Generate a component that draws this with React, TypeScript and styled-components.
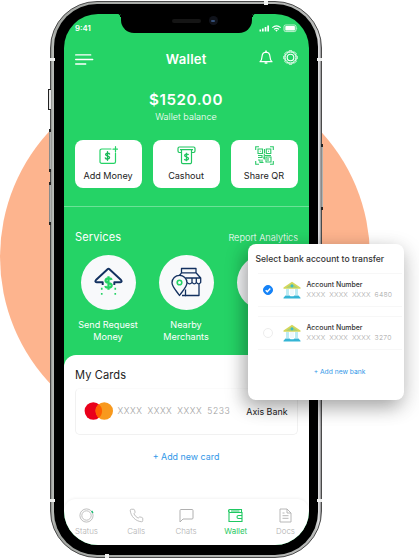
import React from 'react';
import styled, { createGlobalStyle, css } from 'styled-components';

const GREEN = '#25d366';
const NAVY = '#12305f';

const GlobalStyle = createGlobalStyle`
  *, *::before, *::after { box-sizing: border-box; }
  body {
    margin: 0;
    background: #fff;
    font-family: Inter, 'Liberation Sans', sans-serif;
  }
  svg { display: block; flex: none; }
`;

const Stage = styled.main`
  position: relative;
  width: 419px;
  height: 558px;
  overflow: hidden;
`;

const Disc = styled.div`
  position: absolute;
  left: 0;
  top: 72px;
  width: 370px;
  height: 370px;
  border-radius: 50%;
  background: #fdb48e;
`;

const Phone = styled.section`
  position: absolute;
  left: 50px;
  top: 1px;
  width: 272px;
  height: 557px;
  padding: 2px 3px;
  border: 1px solid #4a4a4a;
  border-radius: 47px;
  background: linear-gradient(90deg, #8b8d8a, #bfc2be 2px, #a5a8a4 4px, #b8bab8 264px, #e0e0e2 268px, #8b8b8d);
`;

const SideButton = styled.i<{ $side: 'left' | 'right'; $top: number; $height: number; $hollow?: boolean }>`
  position: absolute;
  ${(p) => p.$side}: -2px;
  top: ${(p) => p.$top}px;
  width: 2px;
  height: ${(p) => p.$height}px;
  border: solid #222;
  border-width: 3px 0;
  background: linear-gradient(90deg, #777, #c4c6c4);
  ${(p) => p.$hollow && css`
    left: -3px;
    width: 3px;
    border-width: 1px 0 1px 1px;
    background: #e8e8e8;
  `}
`;

const Band = styled.i<{ $x: number; $y: number; $vertical?: boolean }>`
  position: absolute;
  left: ${(p) => p.$x}px;
  top: ${(p) => p.$y}px;
  width: ${(p) => (p.$vertical ? 4 : 5)}px;
  height: ${(p) => (p.$vertical ? 4 : 3)}px;
  background: #f0f1f0;
`;

const Bezel = styled.div`
  width: 264px;
  height: 551px;
  padding: 9.5px;
  border-radius: 43px;
  background: #000;
`;

const Screen = styled.div`
  position: relative;
  display: flex;
  flex-direction: column;
  width: 245px;
  height: 531px;
  border-radius: 34px;
  overflow: hidden;
  background: ${GREEN};
  color: #fff;
`;

const Notch = styled.div`
  position: absolute;
  left: 57px;
  top: -1px;
  display: flex;
  align-items: center;
  width: 131px;
  height: 20px;
  padding: 0 34px 4px 51px;
  justify-content: space-between;
  border-radius: 0 0 13px 13px;
  background: #000;
  &::before, &::after {
    content: '';
    position: absolute;
    top: 0;
    width: 3px;
    height: 4px;
    border-top: 1px solid #000;
  }
  &::before { left: -3px; border-top-right-radius: 3px; border-right: 1px solid #000; }
  &::after { right: -3px; border-top-left-radius: 3px; border-left: 1px solid #000; }
`;

const Speaker = styled.span`
  width: 29px;
  height: 4px;
  border-radius: 2px;
  background: #151515;
`;

const Camera = styled.span`
  display: grid;
  place-items: center;
  width: 9px;
  height: 9px;
  border-radius: 50%;
  background: #10131b;
  &::before {
    content: '';
    width: 4px;
    height: 2px;
    border-radius: 1px;
    background: #34507a;
  }
`;

const StatusBar = styled.div`
  display: flex;
  align-items: center;
  justify-content: space-between;
  height: 29px;
  padding: 0 11px 0 11.5px;
  font-size: 7.8px;
  font-weight: 600;
`;

const Header = styled.header`
  display: grid;
  grid-template-columns: 48px 1fr 48px;
  align-items: center;
  height: 32px;
  padding: 0 10.5px 0 11px;
`;

const Title = styled.h1`
  margin: 0;
  text-align: center;
  font-size: 13.1px;
  font-weight: 600;
  letter-spacing: 0.25px;
`;

const HeaderIcons = styled.div`
  display: flex;
  align-items: center;
  justify-content: flex-end;
  gap: 10px;
  margin-top: -2px;
`;

const Balance = styled.div`
  display: flex;
  flex-direction: column;
  align-items: center;
  height: 65px;
  padding-top: 16.5px;
`;

const Amount = styled.strong`
  font-size: 15.2px;
  line-height: 18px;
  font-weight: 600;
  letter-spacing: 0.6px;
`;

const BalanceNote = styled.span`
  margin-top: 2px;
  font-size: 9.1px;
  line-height: 12px;
  font-weight: 300;
`;

const Actions = styled.div`
  display: flex;
  justify-content: space-between;
  height: 67px;
  padding: 0 11px 19px;
  border-bottom: 1px solid #6be297;
`;

const ActionButton = styled.button`
  display: flex;
  flex-direction: column;
  align-items: center;
  width: 67px;
  height: 48px;
  padding: 6px 0 0;
  gap: 4px;
  border: 0;
  border-radius: 8px;
  background: #fff;
  color: #222;
  font: 400 9.1px/14px Inter, sans-serif;
  white-space: nowrap;
`;

const ServiceHead = styled.div`
  display: flex;
  align-items: center;
  justify-content: space-between;
  height: 47px;
  padding: 14px 10.5px 0 11.5px;
`;

const SectionTitle = styled.h2`
  margin: 0;
  font-size: 11.1px;
  font-weight: 400;
  letter-spacing: 0.1px;
`;

const ReportLink = styled.a`
  font-size: 9.2px;
  font-weight: 300;
`;

const ServiceList = styled.div`
  display: flex;
  gap: 12px;
  height: 101px;
  padding: 1px 0 0 11.5px;
`;

const Service = styled.div`
  display: flex;
  flex: none;
  flex-direction: column;
  align-items: center;
  width: 66px;
  font-size: 9.1px;
  line-height: 12px;
  text-align: center;
  white-space: nowrap;
`;

const ServiceDisc = styled.span`
  display: grid;
  place-items: center;
  width: 55px;
  height: 55px;
  margin-bottom: 9px;
  border-radius: 50%;
  background: #f8f9fb;
`;

const Sheet = styled.div`
  display: flex;
  flex: 1;
  flex-direction: column;
  border-radius: 12px 12px 0 0;
  background: #fff;
  color: #222;
`;

const CardsTitle = styled(SectionTitle)`
  padding: 13px 11.5px 0;
  line-height: 15px;
`;

const CardRow = styled.div`
  display: flex;
  align-items: center;
  height: 47px;
  margin: 5px 11px 0;
  padding: 0 9px 0 8px;
  border: 1px solid #f1f1f1;
  border-top-color: #fbfbfb;
  border-radius: 5px;
`;

const CardNumber = styled.span`
  margin-left: 4px;
  color: #9e9e9e;
  font-size: 8.6px;
  font-weight: 300;
  letter-spacing: 0.55px;
  word-spacing: 2px;
  white-space: nowrap;
`;

const BankName = styled.span`
  margin-left: auto;
  font-size: 8.9px;
`;

const AddCard = styled.a`
  margin-top: 15.5px;
  text-align: center;
  color: #3197e8;
  font-size: 8.9px;
  line-height: 14px;
`;

const TabBar = styled.nav`
  display: flex;
  justify-content: space-between;
  height: 46px;
  margin-top: auto;
  padding: 9px 8px 0 8px;
  border-radius: 12px 12px 0 0;
  box-shadow: 0 -1px 3px rgba(0, 0, 0, 0.05);
`;

const Tab = styled.div<{ $active?: boolean }>`
  display: flex;
  flex-direction: column;
  align-items: center;
  width: 30px;
  gap: 3.4px;
  color: ${(p) => (p.$active ? '#1fc862' : '#b0b0b0')};
  font-size: 7.9px;
  line-height: 10px;
  font-weight: ${(p) => (p.$active ? 400 : 300)};
`;

const Dialog = styled.aside`
  position: absolute;
  left: 248px;
  top: 244px;
  display: flex;
  flex-direction: column;
  width: 156px;
  height: 156px;
  padding-top: 9px;
  border-radius: 8px;
  background: #fff;
  color: #333;
  box-shadow: -5px 7px 18px rgba(0, 0, 0, 0.26), 3px 6px 22px rgba(0, 0, 0, 0.14);
`;

const DialogTitle = styled.h3`
  margin: 0 0 7px 7.5px;
  font-size: 8.6px;
  line-height: 13px;
  font-weight: 500;
  letter-spacing: 0;
  white-space: nowrap;
`;

const Account = styled.div`
  display: flex;
  align-items: center;
  height: 34px;
  margin: 0 2px 9px 10px;
  padding-left: 5px;
  border: solid #f7f7f7;
  border-width: 1px 0;
`;

const Radio = styled.span<{ $checked?: boolean }>`
  display: grid;
  place-items: center;
  width: 10px;
  height: 10px;
  margin-right: 10px;
  border: 1px solid ${(p) => (p.$checked ? '#1683f7' : '#ededed')};
  border-radius: 50%;
  background: ${(p) => (p.$checked ? '#1683f7' : '#fff')};
`;

const AccountText = styled.div`
  display: flex;
  flex-direction: column;
  margin-left: 5.5px;
  font-size: 6.9px;
  line-height: 9.6px;
  font-weight: 500;
  white-space: nowrap;
`;

const AccountNumber = styled.span`
  color: #a4a4a4;
  font-size: 6.8px;
  font-weight: 300;
  letter-spacing: 0.22px;
  word-spacing: 1.7px;
`;

const AddBank = styled.a`
  margin: 7.5px 0 0 27px;
  text-align: center;
  color: #3197e8;
  font-size: 6.7px;
  line-height: 10px;
`;

function StatusIcons() {
  return (
    <svg width="39" height="9" viewBox="0 0 39 9" fill="#fff">
      <rect x="0.5" y="5.5" width="1.6" height="2" />
      <rect x="3" y="4.5" width="1.7" height="3" />
      <rect x="5.7" y="3" width="1.7" height="4.5" />
      <rect x="8.3" y="1.5" width="1.7" height="6" />
      <g fill="none" stroke="#fff" strokeWidth="1.1">
        <path d="M13.3 3.6q4.2-3.5 8.4 0M15 5.4q2.5-2 5 0" />
      </g>
      <path d="M16.3 6.3q1.2-.9 2.4 0l-1.2 1.5z" />
      <rect x="25" y="1" width="12" height="6.6" rx="1.6" fill="none" stroke="#fff" strokeWidth=".7" />
      <rect x="26.3" y="2" width="9.6" height="4.6" rx=".7" />
      <path d="M37.7 3.2q1 1 0 2.2z" />
    </svg>
  );
}

function MenuIcon() {
  return (
    <svg width="19" height="12" viewBox="0 0 19 12" stroke="#fff" strokeWidth="1.4" strokeLinecap="round">
      <path d="M.7 1.9h15M.7 6.5h17M.7 11h10" />
    </svg>
  );
}

function BellIcon() {
  return (
    <svg width="14" height="15" viewBox="0 0 14 15" fill="none" stroke="#fff" strokeWidth="1.2" strokeLinejoin="round">
      <path d="M1 11.7h12c-1.6-1.2-1.9-2.8-2-5C10.8 3.8 9.3 2.3 7 2.2 4.7 2.3 3.2 3.8 3 6.7c-.1 2.2-.4 3.8-2 5z" />
      <path d="M7 .6v1.5M5.6 13h2.8" strokeWidth="1.5" />
    </svg>
  );
}

function GearIcon() {
  const teeth = Array.from({ length: 8 }, (_, i) => i * 45);
  return (
    <svg width="15" height="15" viewBox="0 0 15 15" fill="none" stroke="#fff">
      <circle cx="7.5" cy="7.5" r="5.5" strokeWidth="1" />
      <circle cx="7.5" cy="7.5" r="3.3" strokeWidth="1.1" />
      {teeth.map((a) => (
        <path key={a} d="M5.7 2.2 6.1.8h2.8l.4 1.4" strokeWidth=".9" transform={`rotate(${a} 7.5 7.5)`} />
      ))}
    </svg>
  );
}

const DOLLAR = 'M2.3-2.2C1.8-3.7-2.1-3.6-2.1-1.6S2.3-.5 2.3 1.7-1.8 3.9-2.4 2.2M0-4.8v9.6';

function AddMoneyIcon() {
  return (
    <svg width="19" height="19" viewBox="0 0 19 19" fill="none" stroke={GREEN} strokeWidth="1.2" strokeLinecap="round">
      <path d="M12 3H2.7A1.7 1.7 0 0 0 1 4.7v11A1.7 1.7 0 0 0 2.7 17.4h12.1a1.7 1.7 0 0 0 1.7-1.7V7M16.5.7v5M14 3.2h4.5" />
      <path d={DOLLAR} transform="translate(8.5 10) scale(.9)" stroke="#18b756" strokeWidth="1.5" />
    </svg>
  );
}

function CashoutIcon() {
  return (
    <svg width="19" height="19" viewBox="0 0 19 19" fill="none" stroke="#21c660" strokeWidth="1.2" strokeLinejoin="round">
      <path d="M4 6.5H2.3A1.4 1.4 0 0 1 1 5.1V2.4A1.4 1.4 0 0 1 2.4 1h14.2A1.4 1.4 0 0 1 18 2.4v2.7a1.4 1.4 0 0 1-1.4 1.4H15M3 3.7h13M4.5 4v12.3a1.4 1.4 0 0 0 1.4 1.4h7.2a1.4 1.4 0 0 0 1.4-1.4V4" />
      <path d={DOLLAR} transform="translate(9.5 11) scale(.88)" strokeWidth="1.5" />
    </svg>
  );
}

function QrIcon() {
  return (
    <svg width="19" height="19" viewBox="0 0 19 19" fill="none" stroke="#2bc968" strokeWidth="1.1">
      <path d="M.7 4V.7H4M15 .7h3.3V4M.7 15v3.3H4M15 18.3h3.3V15" />
      <path d="M3 3h4.5v4.5H3zM11.3 3h4.5v4.5h-4.5zM11 11h5v5h-5zM3 9.5h4v2H3M3 14h2v2.5h3.5M8 12h2M9.5 3v4M9.3 7.5v6M10 9.5h6M7 13.5V16M13 12v3" />
      <path d="M4.8 4.8h1v1h-1zM13 4.8h1v1h-1z" fill="#2bc968" stroke="none" />
    </svg>
  );
}

function SendIcon() {
  return (
    <svg width="29" height="30" viewBox="0 0 30 31" fill="none">
      <path d="M9 18.5V15.7H2.7C1.2 15.7 1 14.5 2 13.5L14 2.3q1-.9 2 0L28 13.5c1 1 .8 2.2-.7 2.2H21v2.8" stroke={NAVY} strokeWidth="2" strokeLinejoin="round" />
      <path d={DOLLAR} transform="translate(15 16.5) scale(1.45)" stroke={GREEN} strokeWidth="1.6" />
      <path d="M8 21.5v2M8 27v1.8M22 21.5v2M22 27v1.8" stroke={GREEN} strokeWidth="1.7" />
    </svg>
  );
}

function StoreIcon() {
  return (
    <svg width="31" height="30" viewBox="0 0 31 30" fill="none" stroke={NAVY} strokeWidth="1.3" strokeLinejoin="round">
      <path d="M10.5 5.8V1.5H25v4.3M10.5 5.8H25l4.7 5.2v4.3q-2 3-4.3 0-2 3-4.3 0-2.5 3-5 0M8.5 8.5l2-2.7M14.5 11h15M21 11v4.5M25.3 11v4.5M28 17v11.5H14" />
      <path d="M8.5 28.5C5.5 24 1 19.7 1 15.8a7.5 7.5 0 0 1 15 0C16 19.7 11.5 24 8.5 28.5z" fill="#f8f9fb" />
      <path d="M14.5 22.5v6H11" />
      <circle cx="8.5" cy="15.5" r="2.3" stroke={GREEN} strokeWidth="1.6" />
    </svg>
  );
}

function MastercardLogo() {
  return (
    <svg width="30" height="18" viewBox="0 0 30 18">
      <circle cx="9.3" cy="9" r="8.7" fill="#e9001b" />
      <circle cx="20.3" cy="9" r="8.7" fill="#f8991d" />
      <path d="M14.8 2.2a8.7 8.7 0 0 1 0 13.6 8.7 8.7 0 0 1 0-13.6z" fill="#ff5f00" />
    </svg>
  );
}

function BankIcon() {
  return (
    <svg width="18" height="18" viewBox="0 0 18 18">
      <path d="M9 .8 17.5 6.5v1.2H.5V6.5z" fill="#d5d75c" />
      <path d="M3 6.8 9 2.7l6 4.1z" fill="#a6cf75" />
      <circle cx="9" cy="5" r="1.4" fill="#3abac8" />
      <path d="M3 8h3v6H3zM12 8h3v6h-3z" fill="#bcebf3" />
      <path d="M7 8h4v6H7z" fill="#f0f9fc" />
      <path d="M2.5 14.5h4l1 .8h3l1-.8h4l2 2.2v.8H.5v-.8z" fill="#35b5d5" />
    </svg>
  );
}

function StatusTabIcon() {
  return (
    <svg width="15" height="15" viewBox="0 0 15 15" fill="none" stroke="currentColor" strokeWidth=".8">
      <circle cx="7.5" cy="7.5" r="6.6" />
      <circle cx="7.5" cy="7.5" r="4.7" />
      <path d="M12.6 3a6.6 6.6 0 0 1 1.2 2" stroke="#17bd72" strokeWidth="1.5" />
    </svg>
  );
}

function PhoneTabIcon() {
  return (
    <svg width="15" height="15" viewBox="0 0 24 24" fill="none" stroke="currentColor" strokeWidth="1.3">
      <path d="M22 17v3a2 2 0 0 1-2.2 2C10.5 21 3 13.5 2 4.2A2 2 0 0 1 4 2h3a2 2 0 0 1 2 1.7l.8 3.1-2 2.6a16 16 0 0 0 6.8 6.8l2.6-2 3.1.8A2 2 0 0 1 22 17z" />
    </svg>
  );
}

function ChatTabIcon() {
  return (
    <svg width="15" height="15" viewBox="0 0 15 15" fill="none" stroke="currentColor" strokeLinejoin="round">
      <path d="M1 14V2.5A1 1 0 0 1 2 1.5h11a1 1 0 0 1 1 1V10a1 1 0 0 1-1 1H4z" />
    </svg>
  );
}

function WalletTabIcon() {
  return (
    <svg width="15" height="15" viewBox="0 0 15 15" fill="none" stroke="currentColor" strokeWidth="1.1">
      <path d="M13.5 4.5V1.5H2a1 1 0 0 0 0 3h12v9H1V2.5M3 3h8.5M14 7.5h-3.5a1.5 1.5 0 0 0 0 3H14" />
    </svg>
  );
}

function DocsTabIcon() {
  return (
    <svg width="15" height="15" viewBox="0 0 15 15" fill="none" stroke="currentColor" strokeWidth=".9">
      <path d="M2 1h7l4 4v9H2zM9 1v4h4M4.500 5h2M4.500 7.700h6M4.500 10.300h6" />
    </svg>
  );
}

const accounts = [
  { number: 'XXXX XXXX XXXX 6480', checked: true },
  { number: 'XXXX XXXX XXXX 3270', checked: false },
];

const tabs = [
  { label: 'Status', icon: <StatusTabIcon /> },
  { label: 'Calls', icon: <PhoneTabIcon /> },
  { label: 'Chats', icon: <ChatTabIcon /> },
  { label: 'Wallet', icon: <WalletTabIcon />, active: true },
  { label: 'Docs', icon: <DocsTabIcon /> },
];

export default function App() {
  return (
    <>
      <GlobalStyle />
      <Stage>
        <Disc />
        <Phone>
          <SideButton $side="left" $top={87} $height={21} $hollow />
          <SideButton $side="left" $top={127} $height={43} />
          <SideButton $side="left" $top={180} $height={43} />
          <SideButton $side="right" $top={142} $height={66} />
          <Bezel>
            <Screen>
              <StatusBar>
                <span>9:41</span>
                <StatusIcons />
              </StatusBar>
              <Notch>
                <Speaker />
                <Camera />
              </Notch>
              <Header>
                <MenuIcon />
                <Title>Wallet</Title>
                <HeaderIcons>
                  <BellIcon />
                  <GearIcon />
                </HeaderIcons>
              </Header>
              <Balance>
                <Amount>$1520.00</Amount>
                <BalanceNote>Wallet balance</BalanceNote>
              </Balance>
              <Actions>
                <ActionButton><AddMoneyIcon />Add Money</ActionButton>
                <ActionButton><CashoutIcon />Cashout</ActionButton>
                <ActionButton><QrIcon />Share QR</ActionButton>
              </Actions>
              <ServiceHead>
                <SectionTitle>Services</SectionTitle>
                <ReportLink>Report Analytics</ReportLink>
              </ServiceHead>
              <ServiceList>
                <Service>
                  <ServiceDisc><SendIcon /></ServiceDisc>
                  Send Request<br />Money
                </Service>
                <Service>
                  <ServiceDisc><StoreIcon /></ServiceDisc>
                  Nearby<br />Merchants
                </Service>
                <Service>
                  <ServiceDisc />
                </Service>
              </ServiceList>
              <Sheet>
                <CardsTitle>My Cards</CardsTitle>
                <CardRow>
                  <MastercardLogo />
                  <CardNumber>XXXX XXXX XXXX 5233</CardNumber>
                  <BankName>Axis Bank</BankName>
                </CardRow>
                <AddCard>+ Add new card</AddCard>
                <TabBar>
                  {tabs.map((tab) => (
                    <Tab key={tab.label} $active={tab.active}>
                      {tab.icon}
                      {tab.label}
                    </Tab>
                  ))}
                </TabBar>
              </Sheet>
            </Screen>
          </Bezel>
          <Band $x={-1} $y={56} />
          <Band $x={266} $y={56} />
          <Band $x={-1} $y={497} />
          <Band $x={266} $y={497} />
          <Band $x={213} $y={-1} $vertical />
          <Band $x={54} $y={552} $vertical />
        </Phone>
        <Dialog>
          <DialogTitle>Select bank account to transfer</DialogTitle>
          {accounts.map((account) => (
            <Account key={account.number}>
              <Radio $checked={account.checked}>
                {account.checked && (
                  <svg width="8" height="8" viewBox="0 0 8 8" fill="none" stroke="#fff" strokeWidth="1.3">
                    <path d="m1.7 4.2 1.6 1.6 3-3.3" />
                  </svg>
                )}
              </Radio>
              <BankIcon />
              <AccountText>
                Account Number
                <AccountNumber>{account.number}</AccountNumber>
              </AccountText>
            </Account>
          ))}
          <AddBank>+ Add new bank</AddBank>
        </Dialog>
      </Stage>
    </>
  );
}
